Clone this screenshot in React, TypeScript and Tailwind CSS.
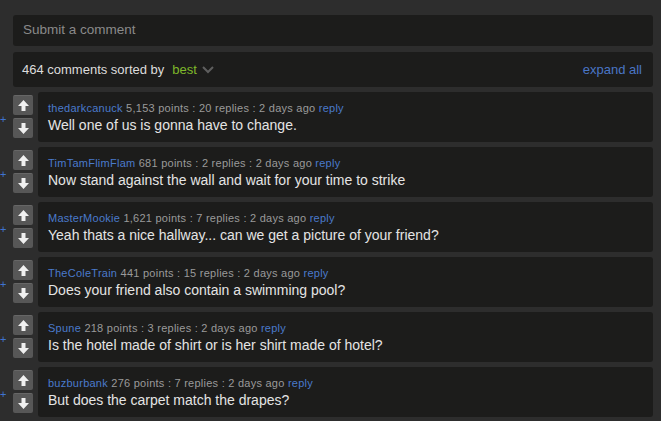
import React from 'react';

interface Comment {
  user: string;
  points: string;
  replies: number;
  text: string;
}

const comments: Comment[] = [
  { user: 'thedarkcanuck', points: '5,153', replies: 20, text: 'Well one of us is gonna have to change.' },
  { user: 'TimTamFlimFlam', points: '681', replies: 2, text: 'Now stand against the wall and wait for your time to strike' },
  { user: 'MasterMookie', points: '1,621', replies: 7, text: 'Yeah thats a nice hallway... can we get a picture of your friend?' },
  { user: 'TheColeTrain', points: '441', replies: 15, text: 'Does your friend also contain a swimming pool?' },
  { user: 'Spune', points: '218', replies: 3, text: 'Is the hotel made of shirt or is her shirt made of hotel?' },
  { user: 'buzburbank', points: '276', replies: 7, text: 'But does the carpet match the drapes?' },
];

function Arrow({ down }: { down?: boolean }) {
  return (
    <svg width="11" height="11" viewBox="0 0 11 11" className={down ? 'rotate-180' : ''}>
      <path d="M5.5 0 L11 6 H7.5 V11 H3.5 V6 H0 Z" fill="#f0f0f0" />
    </svg>
  );
}

function VoteButton({ down }: { down?: boolean }) {
  return (
    <div className="w-5 h-5 rounded-[2px] bg-[#575757] border-t border-[#666] flex items-center justify-center">
      <Arrow down={down} />
    </div>
  );
}

function CommentRow({ c }: { c: Comment }) {
  return (
    <div className="flex h-[50px]">
      <div className="w-[13px] flex items-center">
        <span className="text-[11px] leading-none text-[#3f74d0] mt-[4px]">+</span>
      </div>
      <div className="w-5 flex flex-col gap-[3px] pt-[3px]">
        <VoteButton />
        <VoteButton down />
      </div>
      <div className="ml-[5px] flex-1 bg-[#1c1c1b] rounded-[3px] pl-[10px] pt-[9px]">
        <div className="text-[11px] leading-[14px] tracking-[0.25px] text-[#9a9a9a]">
          <span className="text-[#4a7acb]">{c.user}</span> {c.points} points : {c.replies} replies : 2 days ago{' '}
          <span className="text-[#4a7acb]">reply</span>
        </div>
        <div className="text-[14px] leading-[18px] text-[#e4e4e4] mt-[1px]">{c.text}</div>
      </div>
    </div>
  );
}

export default function App() {
  return (
    <div
      className="w-[661px] h-[421px] overflow-hidden bg-[#2d2d2d] pt-[15px] pl-[13px] pr-[8px]"
      style={{ fontFamily: '"Liberation Sans", Arial, sans-serif' }}
    >
      <div className="h-[31px] bg-[#1c1c1b] rounded-[3px] flex items-center pl-[10px] text-[13.5px] text-[#8a8a8a]">
        Submit a comment
      </div>
      <div className="mt-[6px] h-[35px] bg-[#1c1c1b] rounded-[3px] flex items-center pl-[9px] pr-[11px] text-[13px]">
        <span className="text-[#dcdcdc]">464 comments sorted by</span>
        <span className="ml-[8px] text-[#7fb82a]">best</span>
        <svg width="12" height="8" viewBox="0 0 12 8" className="ml-[5px] mt-[1px]">
          <path d="M1 1 L6 6 L11 1" stroke="#5e5e5e" strokeWidth="2" fill="none" />
        </svg>
        <span className="ml-auto text-[#4a76c6]">expand all</span>
      </div>
      <div className="mt-[5px] -ml-[13px] flex flex-col gap-[5px]">
        {comments.map(c => (
          <CommentRow key={c.user} c={c} />
        ))}
      </div>
    </div>
  );
}
